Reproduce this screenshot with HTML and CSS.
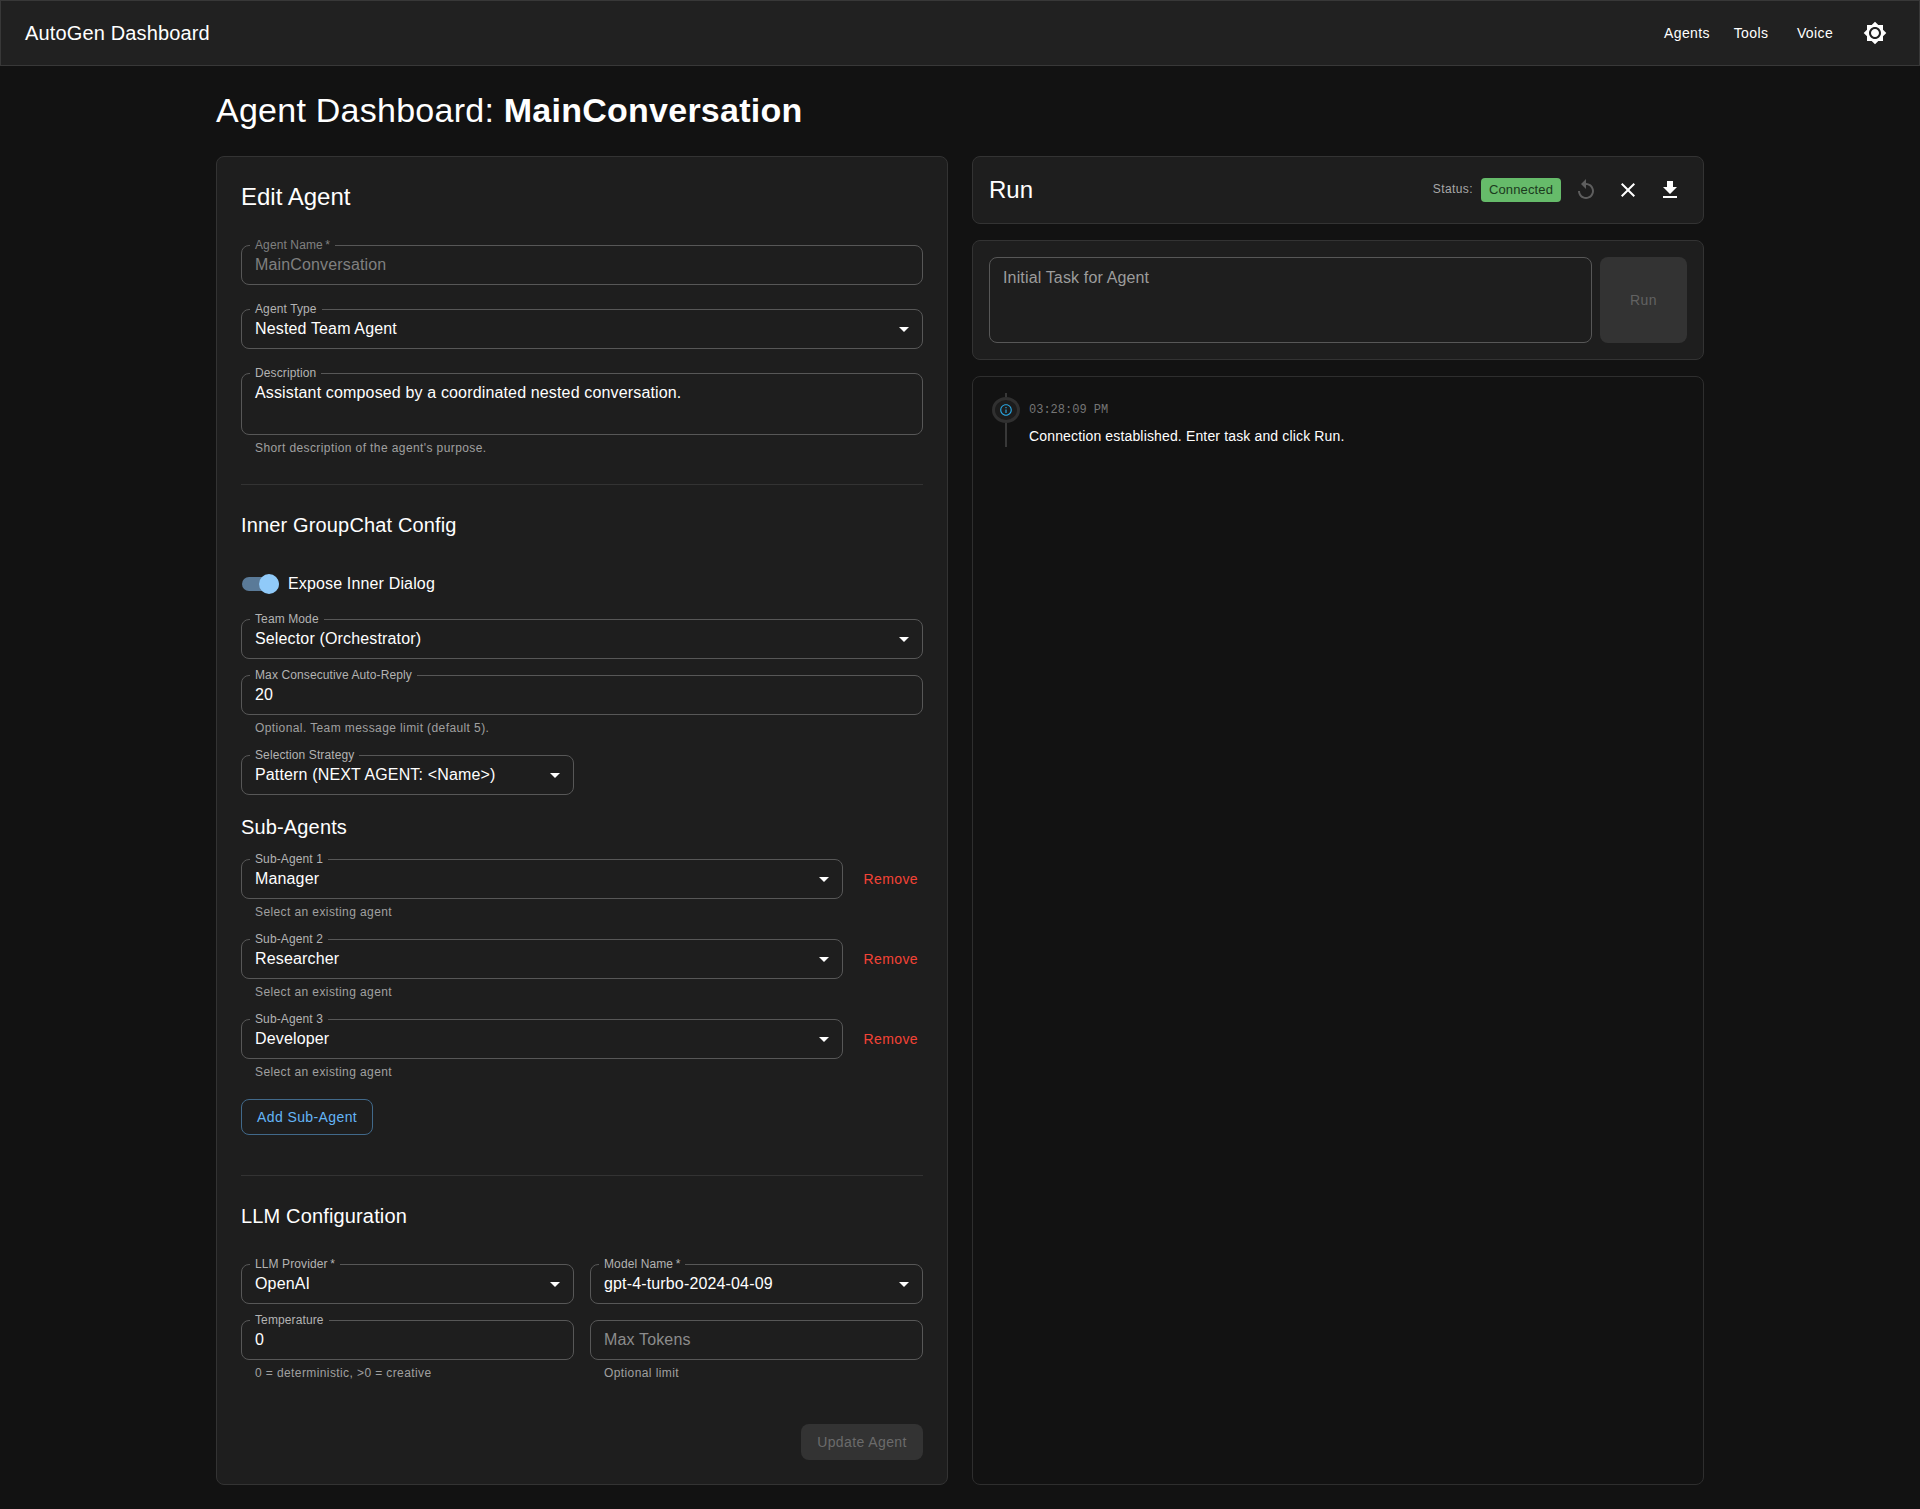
FILE: index.html
```html
<!DOCTYPE html>
<html lang="en">
<head>
  <meta charset="UTF-8">
  <meta name="viewport" content="width=device-width, initial-scale=1.0">
  <title>AutoGen Dashboard</title>
  <link rel="stylesheet" href="styles.css">
</head>
<body>
  <header class="appbar">
    <div class="brand">AutoGen Dashboard</div>
    <nav class="nav">
      <a class="nav-link">Agents</a>
      <a class="nav-link">Tools</a>
      <a class="nav-link">Voice</a>
      <span class="theme-btn">
        <svg viewBox="0 0 24 24"><path d="M20 8.69V4h-4.69L12 .69 8.69 4H4v4.69L.69 12 4 15.31V20h4.69L12 23.31 15.31 20H20v-4.69L23.31 12 20 8.69zM12 18c-3.31 0-6-2.69-6-6s2.69-6 6-6 6 2.69 6 6-2.69 6-6 6zm0-10c-2.21 0-4 1.79-4 4s1.79 4 4 4 4-1.79 4-4-1.79-4-4-4z"/></svg>
      </span>
    </nav>
  </header>

  <main class="container">
    <h1 class="page-title">Agent Dashboard: <strong>MainConversation</strong></h1>

    <div class="columns">
      <section class="card edit-card">
        <h2 class="card-title">Edit Agent</h2>

        <div class="field disabled">
          <span class="field-label">Agent Name&thinsp;*</span>
          <span class="field-value">MainConversation</span>
        </div>
        <div class="field select mt24">
          <span class="field-label">Agent Type</span>
          <span class="field-value">Nested Team Agent</span>
          <svg class="arrow" viewBox="0 0 24 24"><path d="M7 10l5 5 5-5z"/></svg>
        </div>
        <div class="field area mt24">
          <span class="field-label">Description</span>
          <span class="field-value">Assistant composed by a coordinated nested conversation.</span>
        </div>
        <p class="helper">Short description of the agent's purpose.</p>

        <hr class="divider divider-first">

        <h3 class="section-title">Inner GroupChat Config</h3>

        <label class="switch-row">
          <span class="switch"><span class="switch-thumb"></span></span>
          <span>Expose Inner Dialog</span>
        </label>

        <div class="field select mt16">
          <span class="field-label">Team Mode</span>
          <span class="field-value">Selector (Orchestrator)</span>
          <svg class="arrow" viewBox="0 0 24 24"><path d="M7 10l5 5 5-5z"/></svg>
        </div>
        <div class="field mt16">
          <span class="field-label">Max Consecutive Auto-Reply</span>
          <span class="field-value">20</span>
        </div>
        <p class="helper">Optional. Team message limit (default 5).</p>
        <div class="field select half mt16">
          <span class="field-label">Selection Strategy</span>
          <span class="field-value">Pattern (NEXT AGENT: &lt;Name&gt;)</span>
          <svg class="arrow" viewBox="0 0 24 24"><path d="M7 10l5 5 5-5z"/></svg>
        </div>

        <h3 class="section-title mt16">Sub-Agents</h3>

        <div class="sub-agent">
          <div class="sub-agent-main">
            <div class="field select">
              <span class="field-label">Sub-Agent 1</span>
              <span class="field-value">Manager</span>
              <svg class="arrow" viewBox="0 0 24 24"><path d="M7 10l5 5 5-5z"/></svg>
            </div>
            <p class="helper">Select an existing agent</p>
          </div>
          <button class="remove-btn">Remove</button>
        </div>
        <div class="sub-agent">
          <div class="sub-agent-main">
            <div class="field select">
              <span class="field-label">Sub-Agent 2</span>
              <span class="field-value">Researcher</span>
              <svg class="arrow" viewBox="0 0 24 24"><path d="M7 10l5 5 5-5z"/></svg>
            </div>
            <p class="helper">Select an existing agent</p>
          </div>
          <button class="remove-btn">Remove</button>
        </div>
        <div class="sub-agent">
          <div class="sub-agent-main">
            <div class="field select">
              <span class="field-label">Sub-Agent 3</span>
              <span class="field-value">Developer</span>
              <svg class="arrow" viewBox="0 0 24 24"><path d="M7 10l5 5 5-5z"/></svg>
            </div>
            <p class="helper">Select an existing agent</p>
          </div>
          <button class="remove-btn">Remove</button>
        </div>

        <button class="outline-btn">Add Sub-Agent</button>

        <hr class="divider divider-second">

        <h3 class="section-title">LLM Configuration</h3>

        <div class="llm-grid">
          <div class="field select">
            <span class="field-label">LLM Provider&thinsp;*</span>
            <span class="field-value">OpenAI</span>
            <svg class="arrow" viewBox="0 0 24 24"><path d="M7 10l5 5 5-5z"/></svg>
          </div>
          <div class="field select">
            <span class="field-label">Model Name&thinsp;*</span>
            <span class="field-value">gpt-4-turbo-2024-04-09</span>
            <svg class="arrow" viewBox="0 0 24 24"><path d="M7 10l5 5 5-5z"/></svg>
          </div>
          <div>
            <div class="field">
              <span class="field-label">Temperature</span>
              <span class="field-value">0</span>
            </div>
            <p class="helper">0 = deterministic, &gt;0 = creative</p>
          </div>
          <div>
            <div class="field placeholder">
              <span class="field-value">Max Tokens</span>
            </div>
            <p class="helper">Optional limit</p>
          </div>
        </div>

        <div class="form-actions">
          <button class="update-btn" disabled>Update Agent</button>
        </div>
      </section>

      <div class="run-column">
        <section class="card run-header">
          <h2 class="card-title">Run</h2>
          <div class="run-tools">
            <span class="status-label">Status:</span>
            <span class="chip">Connected</span>
            <span class="icon-btn dim">
              <svg viewBox="0 0 24 24"><path d="M12 5V1L7 6l5 5V7c3.31 0 6 2.69 6 6s-2.69 6-6 6-6-2.69-6-6H4c0 4.42 3.58 8 8 8s8-3.58 8-8-3.58-8-8-8z"/></svg>
            </span>
            <span class="icon-btn">
              <svg viewBox="0 0 24 24"><path d="M19 6.41L17.59 5 12 10.59 6.41 5 5 6.41 10.59 12 5 17.59 6.41 19 12 13.41 17.59 19 19 17.59 13.41 12z"/></svg>
            </span>
            <span class="icon-btn">
              <svg viewBox="0 0 24 24"><path d="M19 9h-4V3H9v6H5l7 7 7-7zM5 18v2h14v-2H5z"/></svg>
            </span>
          </div>
        </section>

        <section class="card task-card">
          <div class="task-input">Initial Task for Agent</div>
          <button class="task-run" disabled>Run</button>
        </section>

        <section class="card log-card">
          <div class="log-item">
            <div class="log-track">
              <span class="log-stem log-stem-top"></span>
              <span class="log-dot">
                <svg viewBox="0 0 24 24"><path d="M11 7h2v2h-2zm0 4h2v6h-2zm1-9C6.48 2 2 6.48 2 12s4.48 10 10 10 10-4.48 10-10S17.52 2 12 2zm0 18c-4.41 0-8-3.59-8-8s3.59-8 8-8 8 3.59 8 8-3.59 8-8 8z"/></svg>
              </span>
              <span class="log-stem log-stem-bottom"></span>
            </div>
            <div class="log-body">
              <div class="log-time">03:28:09 PM</div>
              <div class="log-text">Connection established. Enter task and click Run.</div>
            </div>
          </div>
        </section>
      </div>
    </div>
  </main>
</body>
</html>
```

FILE: styles.css
```css
* {
  box-sizing: border-box;
}
body {
  margin: 0;
  background-color: #121212;
  color: #fff;
  font-family: "Liberation Sans", Arial, sans-serif;
  font-size: 16px;
  letter-spacing: 0.15px;
}
svg {
  display: block;
  fill: currentColor;
}

/* app bar */
.appbar {
  display: flex;
  align-items: center;
  justify-content: space-between;
  height: 66px;
  padding: 0 24px;
  background-color: #212121;
  border: 1px solid #383838;
}
.brand {
  font-size: 20px;
  line-height: 32px;
}
.nav {
  display: flex;
  align-items: center;
}
.nav-link {
  width: 64px;
  text-align: center;
  font-size: 14px;
  letter-spacing: 0.4px;
  line-height: 24px;
}
.theme-btn {
  display: flex;
  align-items: center;
  justify-content: center;
  margin-left: 8px;
  width: 40px;
  height: 40px;
}
.theme-btn svg {
  width: 24px;
  height: 24px;
}

.icon-btn {
  display: flex;
  align-items: center;
  justify-content: center;
  width: 34px;
  height: 34px;
  color: #fff;
}
.icon-btn svg {
  width: 24px;
  height: 24px;
}
.icon-btn.dim {
  color: #5e5e5e;
}

/* page */
.container {
  width: 1488px;
  margin: 0 auto;
  padding: 23px 0 24px;
}
.page-title {
  margin: 0 0 25px;
  font-size: 34px;
  font-weight: 400;
  letter-spacing: 0.25px;
  line-height: 42px;
}
.page-title strong {
  font-weight: 700;
}
.columns {
  display: grid;
  grid-template-columns: 1fr 1fr;
  gap: 24px;
}
.card {
  background-color: #1e1e1e;
  border: 1px solid #333;
  border-radius: 8px;
}
.edit-card {
  padding: 24px;
}
.card-title {
  margin: 0;
  font-size: 24px;
  font-weight: 400;
  letter-spacing: 0;
  line-height: 32px;
}
.edit-card > .card-title {
  margin-bottom: 32px;
}
.section-title {
  margin: 0;
  font-size: 20px;
  font-weight: 400;
  line-height: 32px;
}
.mt16 {
  margin-top: 16px;
}
.mt24 {
  margin-top: 24px;
}

/* outlined fields */
.field {
  position: relative;
  display: flex;
  align-items: center;
  height: 40px;
  padding: 0 13px 1px;
  border: 1px solid #575757;
  border-radius: 8px;
  background-color: #1e1e1e;
}
.field-label {
  position: absolute;
  left: 8px;
  top: -9px;
  padding: 0 5px;
  background-color: #1e1e1e;
  color: #b3b3b3;
  font-size: 12px;
  letter-spacing: 0.11px;
  line-height: 16px;
}
.field-value {
  font-size: 16px;
  line-height: 23px;
}
.field.disabled .field-value,
.field.disabled .field-label {
  color: #808080;
}
.field.placeholder .field-value {
  color: #8c8c8c;
}
.field.area {
  align-items: flex-start;
  height: 62px;
  padding-top: 7px;
}
.field.half {
  width: 333px;
}
.arrow {
  position: absolute;
  right: 6px;
  top: 7px;
  width: 24px;
  height: 24px;
  color: #fff;
}
.helper {
  margin: 3px 0 0;
  padding: 0 0 1px 14px;
  color: #a0a0a0;
  font-size: 12px;
  letter-spacing: 0.4px;
  line-height: 20px;
}
.divider {
  margin: 0;
  border: 0;
  border-top: 1px solid #333;
}
.divider-first {
  margin: 25px 0 24px;
}
.divider-second {
  margin: 40px 0 24px;
}

/* switch */
.switch-row {
  display: flex;
  align-items: center;
  height: 38px;
  margin-top: 24px;
  gap: 9px;
}
.switch {
  position: relative;
  display: block;
  width: 37px;
  height: 14px;
  margin-left: 1px;
  background-color: #5a7a98;
  border-radius: 7px;
}
.switch-thumb {
  position: absolute;
  right: 0;
  top: -3px;
  width: 20px;
  height: 20px;
  background-color: #90caf9;
  border-radius: 50%;
}

/* sub agents */
.sub-agent {
  display: flex;
  align-items: flex-start;
  gap: 15px;
  margin-top: 16px;
}
.sub-agent-main {
  flex: 1;
}
.remove-btn {
  height: 32px;
  margin-top: 4px;
  padding: 0 5px;
  border: 0;
  background: none;
  color: #f44336;
  font-family: inherit;
  font-size: 14px;
  letter-spacing: 0.4px;
}
.outline-btn {
  display: block;
  height: 36px;
  margin-top: 16px;
  padding: 0 15px;
  background: none;
  border: 1px solid #41698a;
  border-radius: 8px;
  color: #64b5f6;
  font-family: inherit;
  font-size: 14px;
  letter-spacing: 0.4px;
}

/* llm */
.llm-grid {
  display: grid;
  grid-template-columns: 1fr 1fr;
  gap: 16px;
  margin-top: 32px;
}
.form-actions {
  display: flex;
  justify-content: flex-end;
  margin-top: 40px;
}
.update-btn {
  width: 122px;
  height: 36px;
  border: 0;
  border-radius: 8px;
  background-color: #333;
  color: #6b6b6b;
  font-family: inherit;
  font-size: 14px;
  letter-spacing: 0.4px;
}

/* run column */
.run-column {
  display: flex;
  flex-direction: column;
  gap: 16px;
}
.run-header {
  display: flex;
  align-items: center;
  justify-content: space-between;
  height: 68px;
  padding: 0 16px;
}
.run-tools {
  display: flex;
  align-items: center;
  gap: 8px;
}
.status-label {
  margin-bottom: 2px;
  color: #a8a8a8;
  font-size: 12px;
  letter-spacing: 0.4px;
}
.chip {
  padding: 0 8px;
  background-color: #66bb6a;
  border-radius: 4px;
  color: #1b3a1d;
  font-size: 13px;
  letter-spacing: 0.13px;
  line-height: 24px;
}
.task-card {
  display: flex;
  gap: 8px;
  padding: 16px;
}
.task-input {
  flex: 1;
  height: 86px;
  padding: 8px 13px;
  border: 1px solid #575757;
  border-radius: 8px;
  color: #9c9c9c;
  line-height: 23px;
}
.task-run {
  width: 87px;
  height: 86px;
  border: 0;
  border-radius: 8px;
  background-color: #333;
  color: #626262;
  font-family: inherit;
  font-size: 14px;
  letter-spacing: 0.4px;
}
.log-card {
  flex: 1;
  padding: 16px;
  background-color: #121212;
  border-color: #2e2e2e;
}
.log-item {
  display: flex;
  gap: 6px;
}
.log-track {
  display: flex;
  flex-direction: column;
  align-items: center;
  width: 34px;
}
.log-stem {
  width: 2px;
  background-color: #383838;
}
.log-stem-top {
  height: 4px;
}
.log-stem-bottom {
  height: 24px;
}
.log-dot {
  display: flex;
  align-items: center;
  justify-content: center;
  width: 28px;
  height: 26px;
  border: 3px solid #303030;
  border-radius: 50%;
  background-color: #1c1c1c;
  color: #29a5e0;
}
.log-dot svg {
  width: 14px;
  height: 14px;
}
.log-body {
  padding-top: 9px;
}
.log-time {
  color: #757575;
  font-family: "Liberation Mono", monospace;
  font-size: 12px;
  letter-spacing: 0;
  line-height: 16px;
}
.log-text {
  margin-top: 8px;
  font-size: 14px;
  line-height: 20px;
}
```
